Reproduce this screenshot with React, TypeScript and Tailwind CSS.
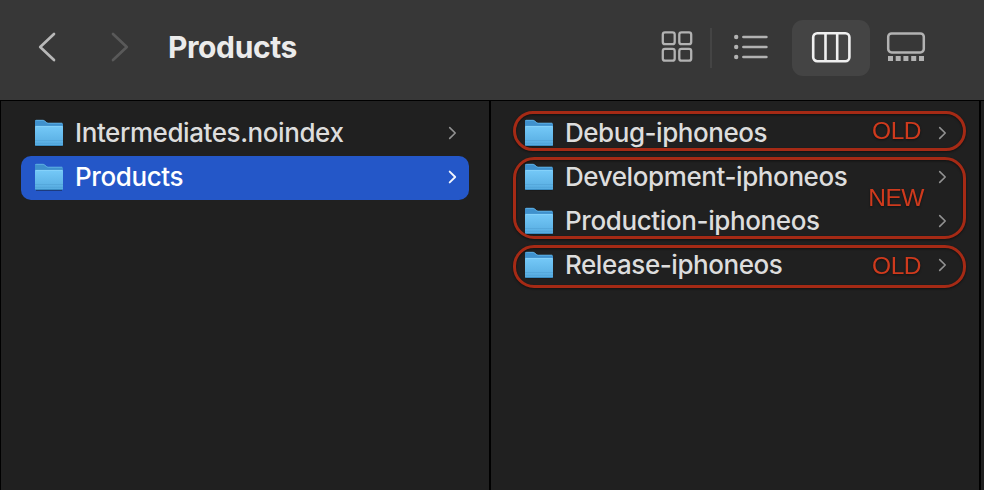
import clsx from 'clsx';

type EntryProps = {
    name: string;
    spacing: string;
    selected?: boolean;
};

const sourceEntries: EntryProps[] = [
    { name: 'Intermediates.noindex', spacing: 'tracking-[-0.42px]' },
    { name: 'Products', spacing: 'tracking-[-0.4px]', selected: true }
];

const productEntries: EntryProps[] = [
    { name: 'Debug-iphoneos', spacing: 'tracking-[-0.46px]' },
    { name: 'Development-iphoneos', spacing: 'tracking-[-0.41px]' },
    { name: 'Production-iphoneos', spacing: 'tracking-[-0.39px]' },
    { name: 'Release-iphoneos', spacing: 'tracking-[-0.45px]' }
];

const notes = [
    { label: 'OLD', box: 'top-[10px] h-[40px]', text: 'pr-[42px]' },
    { label: 'NEW', box: 'top-[56px] h-[82px]', text: 'pr-[39px]' },
    { label: 'OLD', box: 'top-[144px] h-[43px]', text: 'pr-[42px] pb-[1px]' }
];

const FolderIcon = () => (
    <svg width="30" height="28" viewBox="0 0 30 28" className="shrink-0 mb-[2px]">
        <defs>
            <linearGradient id="folderFront" x1="0" y1="0" x2="0" y2="1">
                <stop offset="0" stopColor="#75c9f8" />
                <stop offset="1" stopColor="#56abe0" />
            </linearGradient>
        </defs>
        <path d="M2 27.4h26" stroke="#111" strokeOpacity=".45" strokeWidth="1" />
        <path
            d="M1 2.2Q1 1 2.3 1h6.5q1 0 1.8.7l1.8 1.5q.8.7 1.8.7h13.3Q29 3.9 29 5.2V25.6Q29 27 27.6 27H2.4Q1 27 1 25.6z"
            fill="#3f91cd"
        />
        <path d="M1.3 1.8Q1.6 1.3 2.3 1.3h6.5q1 0 1.8.7l1.8 1.5q.8.7 1.8.7h14" fill="none" stroke="#62b3e6" strokeWidth=".9" />
        <path d="M1 7.7Q1 6.9 2 6.9h26q1 0 1 .8v17.9Q29 27 27.6 27H2.4Q1 27 1 25.6z" fill="url(#folderFront)" />
        <path d="M1.5 7.4h27" stroke="#8bd4fb" strokeWidth=".8" />
        <path d="M1 21.5h28M1 24.3h28" stroke="#4797cb" strokeOpacity=".55" strokeWidth=".7" />
        <path d="M1.6 26.5h26.8" stroke="#3788be" strokeWidth=".9" />
    </svg>
);

const RowArrow = ({ selected }: { selected?: boolean }) => (
    <svg
        width="9"
        height="14"
        viewBox="0 0 9 14"
        fill="none"
        strokeWidth={selected ? 1.9 : 1.6}
        strokeLinecap="round"
        strokeLinejoin="round"
        className={clsx('ml-auto mb-[2px] shrink-0', selected ? 'stroke-[#f2f5fd]' : 'stroke-[#929292]')}
    >
        <path d="M1.7 1.6 7.2 7l-5.5 5.4" />
    </svg>
);

const Entry = ({ name, spacing, selected }: EntryProps) => (
    <li
        className={clsx(
            'h-[44px] flex items-center pl-[13px] pr-[12px] rounded-[10px]',
            selected ? 'bg-[#2457c8] text-white' : 'text-[#dddddd]'
        )}
    >
        <FolderIcon />
        <span className={clsx('ml-[11px] pb-[2px] text-[26px] leading-[32px] font-[450] whitespace-nowrap', spacing)}>
            {name}
        </span>
        <RowArrow selected={selected} />
    </li>
);

const Toolbar = () => (
    <header className="h-[101px] shrink-0 flex items-start bg-[#373737] border-b border-black">
        <div className="pt-[31px] pl-[37px] flex gap-[53px]">
            <svg width="20" height="32" viewBox="0 0 20 32" fill="none" stroke="#b8b8b8" strokeWidth="2.7" strokeLinecap="round" strokeLinejoin="round">
                <path d="M17 3 3.2 16 17 29" />
            </svg>
            <svg width="20" height="32" viewBox="0 0 20 32" fill="none" stroke="#595959" strokeWidth="2.7" strokeLinecap="round" strokeLinejoin="round">
                <path d="M3 3 16.8 16 3 29" />
            </svg>
        </div>
        <h1 className="mt-[28px] ml-[38px] text-[30px] leading-[38px] font-bold tracking-[-0.4px] text-[#ebebeb]">Products</h1>
        <div className="mt-[20px] ml-auto mr-[58px] h-[56px] flex items-center">
            <svg width="34" height="34" viewBox="0 0 34 34" fill="none" stroke="#b2b2b2" strokeWidth="2.3" className="mb-[2px]">
                <rect x="2.8" y="2.3" width="11.9" height="11.9" rx="2.2" />
                <rect x="19.3" y="2.3" width="11.9" height="11.9" rx="2.2" />
                <rect x="2.8" y="18.8" width="11.9" height="11.9" rx="2.2" />
                <rect x="19.3" y="18.8" width="11.9" height="11.9" rx="2.2" />
            </svg>
            <div className="ml-[16px] w-[2px] h-[40px] bg-[#444444]" />
            <svg width="36" height="28" viewBox="0 0 36 28" className="ml-[21px] mb-[2px]">
                <g fill="#b2b2b2">
                    <circle cx="3.2" cy="4" r="2.2" />
                    <circle cx="3.2" cy="14" r="2.2" />
                    <circle cx="3.2" cy="24" r="2.2" />
                </g>
                <path d="M10.4 4h23M10.4 14h23M10.4 24h23" stroke="#b2b2b2" strokeWidth="2.6" strokeLinecap="round" />
            </svg>
            <div className="ml-[23px] w-[78px] h-[56px] rounded-[11px] bg-[#444444] flex items-center justify-center pb-[2px]">
                <svg width="40" height="32" viewBox="0 0 40 32" fill="none" stroke="#f0f0f0" strokeWidth="2.6">
                    <rect x="2.2" y="2.2" width="36.2" height="28" rx="4" />
                    <path d="M14.5 2.2v28M26.2 2.2v28" />
                </svg>
            </div>
            <svg width="40" height="32" viewBox="0 0 40 32" className="ml-[16px] mb-[2px]">
                <rect x="2.2" y="2.4" width="35.6" height="19" rx="3.4" fill="none" stroke="#b2b2b2" strokeWidth="2.5" />
                <path d="M2 25h5v5H2zM9.7 25h5v5h-5zM17.4 25h5v5h-5zM25.2 25h5v5h-5zM33 25h5v5h-5z" fill="#b2b2b2" />
            </svg>
        </div>
    </header>
);

const App = () => (
    <div className="w-[984px] h-[490px] flex flex-col overflow-hidden bg-[#202020] font-['Inter',sans-serif]">
        <Toolbar />
        <main className="flex-1 flex border-l border-black">
            <ul className="w-[490px] pt-[11px] pl-[20px] pr-[20px] border-r-2 border-black">
                {sourceEntries.map((entry) => (
                    <Entry key={entry.name} {...entry} />
                ))}
            </ul>
            <section className="relative w-[490px] pt-[11px] pl-[20px] pr-[20px] border-r-2 border-black">
                <ul>
                    {productEntries.map((entry) => (
                        <Entry key={entry.name} {...entry} />
                    ))}
                </ul>
                {notes.map((note) => (
                    <div
                        key={note.box}
                        className={clsx(
                            'absolute left-[22px] w-[453px] rounded-[21px] border-[3px] border-[#a52a15] flex items-center justify-end drop-shadow-[0_1px_1px_rgba(0,0,0,0.5)]',
                            "font-['Liberation_Sans',sans-serif] text-[24.5px] leading-[28px] tracking-[-0.5px] text-[#cf3a1d]",
                            note.box,
                            note.text
                        )}
                    >
                        {note.label}
                    </div>
                ))}
            </section>
        </main>
    </div>
);

export default App;
